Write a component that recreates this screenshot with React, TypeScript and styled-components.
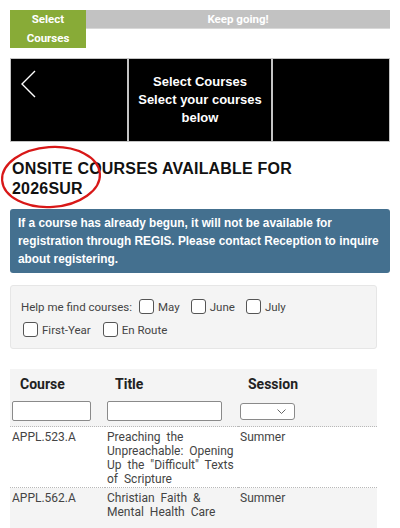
import styled, { createGlobalStyle } from "styled-components";

const GlobalStyle = createGlobalStyle`
  body {
    margin: 0;
    background: #fff;
    font-family: Roboto, "Liberation Sans", sans-serif;
  }
`;

const courses = [
  {
    code: "APPL.523.A",
    title: 'Preaching the Unpreachable: Opening Up the "Difficult" Texts of Scripture',
    session: "Summer",
  },
  {
    code: "APPL.562.A",
    title: "Christian Faith & Mental Health Care",
    session: "Summer",
  },
];

const filters = [
  ["May", "June", "July"],
  ["First-Year", "En Route"],
];

const App = () => {
  return (
    <Page>
      <GlobalStyle />
      <Progress>
        <Step>
          Select
          <br />
          Courses
        </Step>
        <Remaining>Keep going!</Remaining>
      </Progress>

      <Banner>
        <BannerCell>
          <svg width="18" height="28" viewBox="0 0 18 28">
            <polyline
              points="15,1 2,14 15,27"
              fill="none"
              stroke="#fff"
              strokeWidth="1.4"
            />
          </svg>
        </BannerCell>
        <BannerTitle>
          Select Courses
          <br />
          Select your courses
          <br />
          below
        </BannerTitle>
        <BannerCell />
      </Banner>

      <HeadingWrap>
        <Heading>ONSITE COURSES AVAILABLE FOR 2026SUR</Heading>
        <Circle width="104" height="66" viewBox="0 0 104 66">
          <ellipse
            cx="51"
            cy="33"
            rx="49"
            ry="30"
            fill="none"
            stroke="#d81818"
            strokeWidth="2.2"
            transform="rotate(-4 51 33)"
          />
        </Circle>
      </HeadingWrap>

      <Alert>
        If a course has already begun, it will not be available for
        registration through REGIS. Please contact Reception to inquire about
        registering.
      </Alert>

      <FilterBox>
        <FilterLine>
          <FilterLabel>Help me find courses:</FilterLabel>
          {filters[0].map((f) => (
            <Option key={f}>
              <Box />
              {f}
            </Option>
          ))}
        </FilterLine>
        <FilterLine>
          {filters[1].map((f) => (
            <Option key={f}>
              <Box />
              {f}
            </Option>
          ))}
        </FilterLine>
      </FilterBox>

      <Table>
        <colgroup>
          <col style={{ width: 95 }} />
          <col style={{ width: 133 }} />
          <col style={{ width: 72 }} />
          <col />
        </colgroup>
        <thead>
          <tr>
            <Th>Course</Th>
            <Th>Title</Th>
            <Th>Session</Th>
            <Th />
          </tr>
          <tr>
            <FilterCell>
              <TextInput w={79} />
            </FilterCell>
            <FilterCell>
              <TextInput w={115} />
            </FilterCell>
            <FilterCell>
              <Select>
                <svg width="9" height="5" viewBox="0 0 9 5">
                  <polyline
                    points="0.5,0.5 4.5,4.5 8.5,0.5"
                    fill="none"
                    stroke="#555"
                    strokeWidth="0.9"
                  />
                </svg>
              </Select>
            </FilterCell>
            <FilterCell />
          </tr>
        </thead>
        <tbody>
          {courses.map((c, i) => (
            <Row key={c.code} shaded={i % 2 === 1}>
              <Td>{c.code}</Td>
              <TitleCell>{c.title}</TitleCell>
              <Td>{c.session}</Td>
              <Td />
            </Row>
          ))}
        </tbody>
      </Table>
    </Page>
  );
};

const Page = styled.div`
  padding: 10px;
  height: 508px;
  overflow: hidden;
`;

const Progress = styled.div`
  display: flex;
  align-items: flex-start;
`;

const Step = styled.div`
  width: 76px;
  height: 38px;
  background: #88ab37;
  color: #fff;
  font-weight: bold;
  font-size: 11.5px;
  line-height: 19px;
  text-align: center;
`;

const Remaining = styled.div`
  flex: 1;
  height: 18px;
  background: #c2c2c2;
  border-bottom: 1px solid #d8d8d8;
  color: #fff;
  font-weight: bold;
  font-size: 11.5px;
  line-height: 18px;
  text-align: center;
`;

const Banner = styled.div`
  margin-top: 10px;
  display: grid;
  grid-template-columns: 116px 1fr 116px;
  gap: 2px;
  height: 82px;
  border: 1px solid #c4c4c4;
  background: #c4c4c4;
`;

const BannerCell = styled.div`
  background: #000;
  padding: 11px 0 0 9px;
`;

const BannerTitle = styled.div`
  background: #000;
  color: #fff;
  display: flex;
  align-items: center;
  justify-content: center;
  text-align: center;
  font-family: "Liberation Sans", Arial, sans-serif;
  font-weight: bold;
  font-size: 13px;
  line-height: 18px;
`;

const HeadingWrap = styled.div`
  position: relative;
  margin-top: 17px;
`;

const Heading = styled.h1`
  margin: 0;
  padding-left: 2px;
  width: 300px;
  font-family: "Liberation Sans", Arial, sans-serif;
  font-weight: bold;
  font-size: 16px;
  letter-spacing: 0.2px;
  line-height: 20px;
  color: #111;
`;

const Circle = styled.svg`
  position: absolute;
  left: -10px;
  top: -15px;
`;

const Alert = styled.div`
  margin-top: 10px;
  background: #44708f;
  border-radius: 3px;
  color: #fff;
  padding: 5px 8px 5px 8px;
  font-family: "Liberation Sans", Arial, sans-serif;
  font-weight: bold;
  font-size: 11.85px;
  line-height: 18px;
`;

const FilterBox = styled.div`
  margin-top: 12px;
  width: 345px;
  background: #f4f4f4;
  border: 1px solid #e6e6e6;
  border-radius: 3px;
  padding: 9px 10px 7px 10px;
  color: #444;
  font-size: 11.5px;
`;

const FilterLine = styled.div`
  display: flex;
  align-items: center;
  height: 23px;
  gap: 12px;
  padding-left: 2px;
  &:first-child {
    padding-left: 0;
    gap: 11px;
  }
`;

const FilterLabel = styled.span`
  margin-right: -4px;
`;

const Option = styled.label`
  display: flex;
  align-items: center;
  gap: 4px;
`;

const Box = styled.span`
  width: 13px;
  height: 13px;
  border: 1px solid #555;
  border-radius: 3px;
  background: #fff;
`;

const Table = styled.table`
  margin-top: 20px;
  width: 367px;
  border-collapse: collapse;
  table-layout: fixed;
  font-size: 12px;
  color: #444;
`;

const Th = styled.th`
  background: #f4f4f4;
  text-align: left;
  padding: 7px 0 3px 10px;
  line-height: 16px;
  font-size: 14px;
  font-weight: bold;
  color: #222;
`;

const FilterCell = styled.td`
  background: #f4f4f4;
  padding: 6px 2px 5px 2px;
  height: 20px;
`;

const TextInput = styled.div<{ w: number }>`
  width: ${({ w }) => w - 2}px;
  height: 18px;
  border: 1px solid #8a8a8a;
  border-radius: 2px;
  background: #fff;
`;

const Select = styled.div`
  width: 55px;
  height: 17px;
  margin-top: 1px;
  border: 1px solid #8a8a8a;
  border-radius: 3px;
  background: #fff;
  display: flex;
  align-items: center;
  justify-content: flex-end;
  padding-right: 8px;
  box-sizing: border-box;
`;

const Row = styled.tr<{ shaded: boolean }>`
  background: ${({ shaded }) => (shaded ? "#f4f4f4" : "#fff")};
  border-top: 1px dotted #b8b8b8;
`;

const Td = styled.td`
  vertical-align: top;
  padding: 3px 2px 1px 2px;
  line-height: 14px;
  height: 40px;
`;

const TitleCell = styled(Td)`
  word-spacing: 3px;
`;

export default App;
